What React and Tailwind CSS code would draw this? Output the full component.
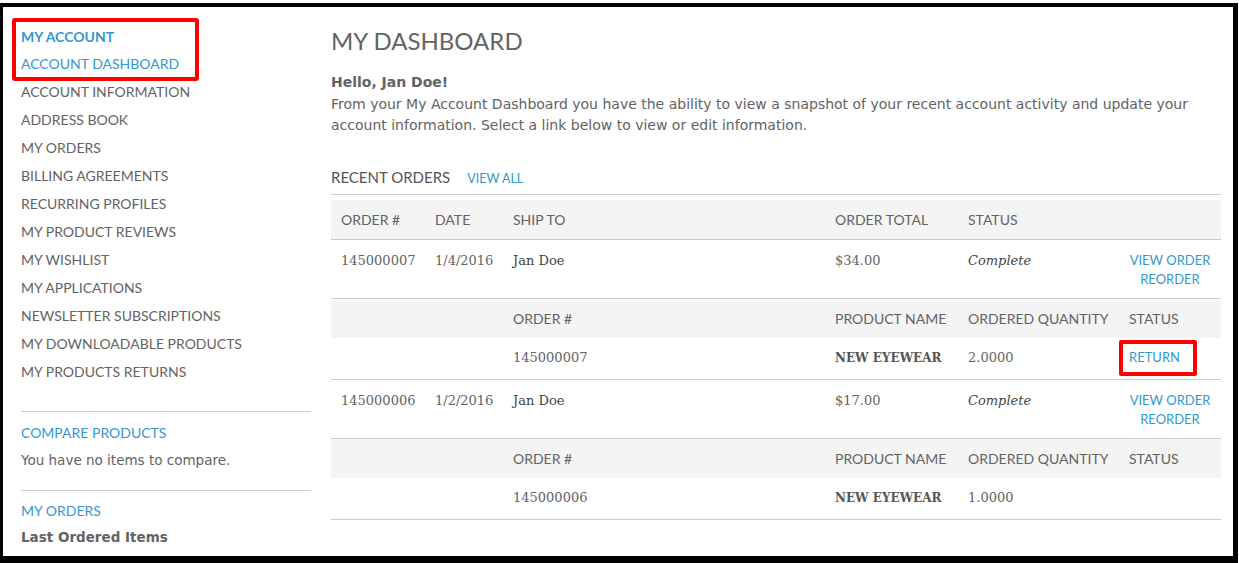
import React from "react";

const sans = "font-['Lato',sans-serif]";
const verdana = "font-['DejaVu_Sans',sans-serif]";
const serif = "font-['DejaVu_Serif',serif]";

const navItems = [
  "ACCOUNT INFORMATION",
  "ADDRESS BOOK",
  "MY ORDERS",
  "BILLING AGREEMENTS",
  "RECURRING PROFILES",
  "MY PRODUCT REVIEWS",
  "MY WISHLIST",
  "MY APPLICATIONS",
  "NEWSLETTER SUBSCRIPTIONS",
  "MY DOWNLOADABLE PRODUCTS",
  "MY PRODUCTS RETURNS",
];

const orders = [
  { id: "145000007", date: "1/4/2016", ship: "Jan Doe", total: "$34.00", qty: "2.0000", ret: true },
  { id: "145000006", date: "1/2/2016", ship: "Jan Doe", total: "$17.00", qty: "1.0000", ret: false },
];

const cols = "grid grid-cols-[94px_78px_322px_133px_161px_102px]";

function Sidebar() {
  return (
    <aside className="w-[290px] pt-[16px] relative">
      {/* highlight */}
      <div className="absolute left-[-9px] top-[11px] w-[187px] h-[63px] border-[4px] border-[#ff0000] rounded-[3px]" />

      <div className={`${sans} text-[14px] leading-[27px] font-bold text-[#3399cc]`}>MY ACCOUNT</div>
      <div className={`${sans} text-[14px] leading-[28px] text-[#3399cc]`}>ACCOUNT DASHBOARD</div>
      {navItems.map((item) => (
        <div key={item} className={`${sans} text-[14px] leading-[28px] text-[#636363]`}>
          {item}
        </div>
      ))}

      <div className="mt-[25px] border-t border-[#cccccc]" />
      <div className={`${sans} mt-[7px] text-[14px] leading-[28px] text-[#3399cc]`}>COMPARE PRODUCTS</div>
      <div className={`${verdana} text-[13.5px] leading-[26px] text-[#636363]`}>You have no items to compare.</div>

      <div className="mt-[17px] border-t border-[#cccccc]" />
      <div className={`${sans} mt-[6px] text-[14px] leading-[28px] text-[#3399cc]`}>MY ORDERS</div>
      <div className={`${verdana} text-[13.5px] leading-[24px] font-bold text-[#636363]`}>Last Ordered Items</div>
    </aside>
  );
}

function HeadCell({ children, className = "" }) {
  return <div className={`px-[10px] ${sans} text-[14px] text-[#636363] ${className}`}>{children}</div>;
}

function OrderRows({ o }) {
  return (
    <>
      {/* main row */}
      <div className={`${cols} h-[59px] border-b border-[#cccccc] pt-[11px] ${serif} text-[13px] leading-[19px] text-[#636363]`}>
        <div className="px-[10px]">{o.id}</div>
        <div className="px-[10px]">{o.date}</div>
        <div className="px-[10px] text-[#444444]">{o.ship}</div>
        <div className="px-[10px]">{o.total}</div>
        <div className="px-[10px] italic text-[#444444]">Complete</div>
        <div className={`px-[10px] ${sans} text-[13px] text-[#3399cc] text-center`}>
          <div>VIEW ORDER</div>
          <div>REORDER</div>
        </div>
      </div>

      {/* sub header */}
      <div className={`${cols} h-[39px] bg-[#f4f4f4] items-center`}>
        <div />
        <div />
        <HeadCell>ORDER #</HeadCell>
        <HeadCell>PRODUCT NAME</HeadCell>
        <HeadCell>ORDERED QUANTITY</HeadCell>
        <HeadCell>STATUS</HeadCell>
      </div>

      {/* sub row */}
      <div className={`${cols} h-[42px] border-b border-[#cccccc] items-center ${serif} text-[13px] text-[#636363]`}>
        <div />
        <div />
        <div className="px-[10px]">{o.id}</div>
        <div className="px-[10px] font-bold text-[12px] text-[#555555]">NEW EYEWEAR</div>
        <div className="px-[10px]">{o.qty}</div>
        <div className="px-[10px] relative self-stretch flex items-center">
          {o.ret && (
            <>
              <span className={`${sans} text-[13px] text-[#3399cc]`}>RETURN</span>
              <div className="absolute left-0 top-[2px] w-[78px] h-[36px] border-[4px] border-[#ff0000] rounded-[2px]" />
            </>
          )}
        </div>
      </div>
    </>
  );
}

export default function App() {
  return (
    <div className="w-[1239px] h-[563px] bg-white pt-[3px] pr-px overflow-hidden">
      <div className="h-full border-black border-t-[4px] border-l-[3px] border-r-[5px] border-b-[7px]">
        <div className="flex pl-[18px] gap-[20px]">
          <Sidebar />

          <main className="w-[890px] pt-[19px]">
            <h1 className={`${sans} text-[24px] leading-[30px] text-[#636363]`}>MY DASHBOARD</h1>

            <div className={`${verdana} mt-[16px] text-[14px] leading-[21.5px] text-[#636363]`}>
              <p className="font-bold">Hello, Jan Doe!</p>
              <p>
                From your My Account Dashboard you have the ability to view a snapshot of your recent account
                activity and update your account information. Select a link below to view or edit information.
              </p>
            </div>

            <div className="mt-[30px] pb-[5px] border-b border-[#cccccc] flex items-baseline gap-[17px]">
              <span className={`${sans} text-[15px] leading-[20px] text-[#555555]`}>RECENT ORDERS</span>
              <span className={`${sans} text-[12.5px] leading-[20px] text-[#3399cc]`}>VIEW ALL</span>
            </div>

            <div className="mt-[5px]">
              <div className={`${cols} h-[40px] bg-[#f4f4f4] border-b border-[#cccccc] items-center`}>
                <HeadCell>ORDER #</HeadCell>
                <HeadCell>DATE</HeadCell>
                <HeadCell>SHIP TO</HeadCell>
                <HeadCell>ORDER TOTAL</HeadCell>
                <HeadCell>STATUS</HeadCell>
                <div />
              </div>
              {orders.map((o) => (
                <OrderRows key={o.id} o={o} />
              ))}
            </div>
          </main>
        </div>
      </div>
    </div>
  );
}
